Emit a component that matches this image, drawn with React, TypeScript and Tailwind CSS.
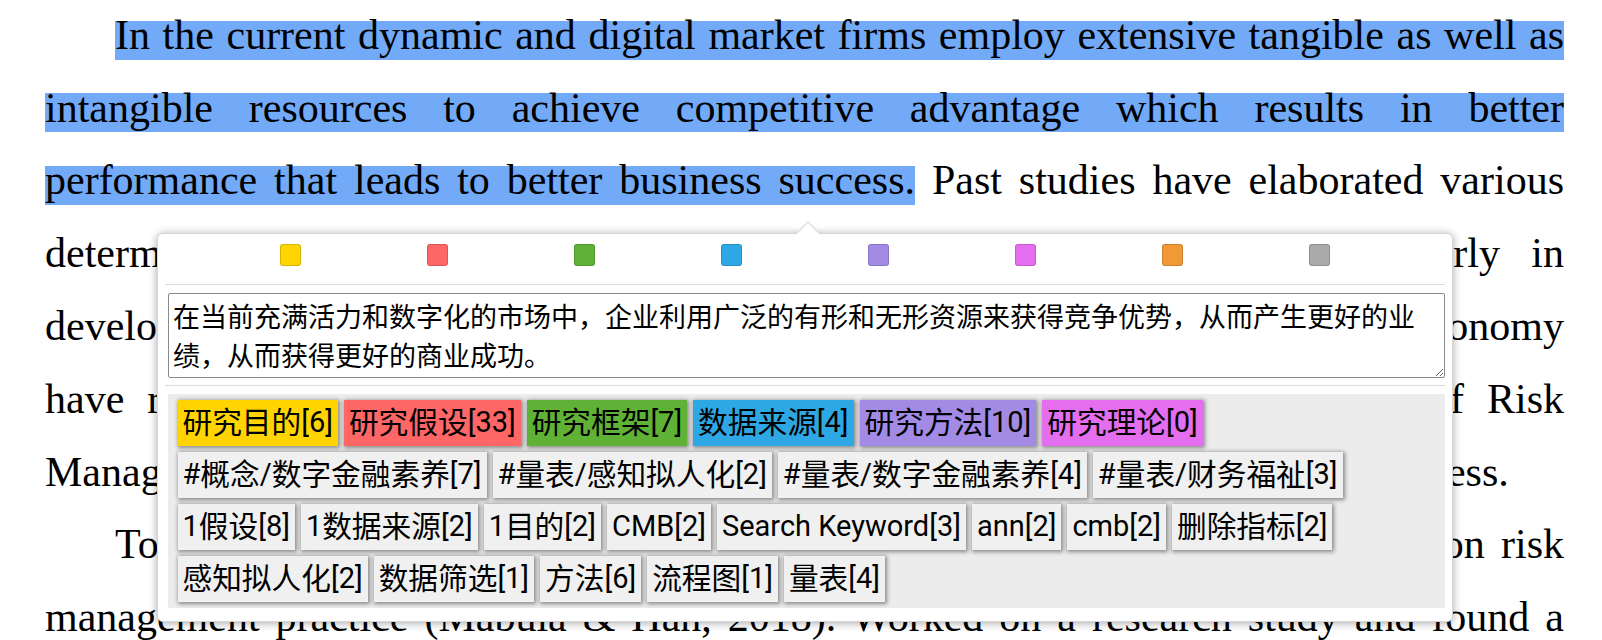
import React from "react";

const HL =
  "bg-[linear-gradient(#72aaf8,#72aaf8)] bg-no-repeat bg-[length:100%_39px] bg-[position:0_10.7px] py-[2px]";

function Line({ children, indent, last }: { children: React.ReactNode; indent?: boolean; last?: boolean }) {
  return (
    <div
      className={
        (indent ? "pl-[70px] " : "") +
        (last ? "text-left " : "text-justify [text-align-last:justify] ")
      }
    >
      {children}
    </div>
  );
}

const swatches = ["#ffd400", "#ff6666", "#5fb236", "#2ea8e5", "#a28ae5", "#e56eee", "#f19837", "#aaaaaa"];

const colored: [string, string][] = [
  ["研究目的[6]", "bg-[#ffd400]"],
  ["研究假设[33]", "bg-[#ff6666]"],
  ["研究框架[7]", "bg-[#5fb236]"],
  ["数据来源[4]", "bg-[#2ea8e5]"],
  ["研究方法[10]", "bg-[#a28ae5]"],
  ["研究理论[0]", "bg-[#e56eee]"],
];

const rows: string[][] = [
  ["#概念/数字金融素养[7]", "#量表/感知拟人化[2]", "#量表/数字金融素养[4]", "#量表/财务福祉[3]"],
  ["1假设[8]", "1数据来源[2]", "1目的[2]", "CMB[2]", "Search Keyword[3]", "ann[2]", "cmb[2]", "删除指标[2]"],
  ["感知拟人化[2]", "数据筛选[1]", "方法[6]", "流程图[1]", "量表[4]"],
];

function TagText({ text }: { text: string }) {
  const parts = text.split(/([\u4e00-\u9fff]+)/).filter((p) => p.length > 0);
  return (
    <>
      {parts.map((p, i) =>
        /[\u4e00-\u9fff]/.test(p) ? (
          <span key={i} className="text-[29.7px]">
            {p}
          </span>
        ) : (
          <span key={i}>{p}</span>
        )
      )}
    </>
  );
}

function Tag({ text, bg }: { text: string; bg: string }) {
  return (
    <div
      className={
        "h-[46px] px-[5px] flex items-center whitespace-nowrap text-[29px] text-black shadow-[1px_1px_4px_1px_rgba(0,0,0,0.42)] " +
        bg
      }
    >
      <TagText text={text} />
    </div>
  );
}

export default function App() {
  return (
    <div className="relative w-[1602px] h-[640px] overflow-hidden bg-white">
      <div className="pl-[45px] pr-[38px] -mt-[1.2px] font-['Liberation_Serif',serif] text-[42px] leading-[72.8px] text-black">
        <Line indent>
          <span className={HL}>
            In the current dynamic and digital market firms employ extensive tangible as well as
          </span>
        </Line>
        <Line>
          <span className={HL}>
            intangible resources to achieve competitive advantage which results in better
          </span>
        </Line>
        <Line>
          <span className={HL}>performance that leads to better business success.</span> Past studies have
          elaborated various
        </Line>
        <Line>
          determinants of business success and the performance of firms, particularly in
        </Line>
        <Line>
          developing countries. Studies conducted in the context of the digital economy
        </Line>
        <Line>
          have recognized the significant importance of the effective implementation of Risk
        </Line>
        <Line last>
          Management practices as a key determinant of the small and medium business success.
        </Line>
        <Line indent>
          To achieve business success, firms are required to place a strong emphasis on risk
        </Line>
        <Line>
          management practice (Mabula &amp; Han, 2018). Worked on a research study and found a
        </Line>
      </div>

      <div className="absolute left-[157px] top-[233px] w-[1296px] bg-white rounded-[6px] border border-[#d6d6d6] shadow-[0_1px_8px_rgba(0,0,0,0.35)] font-['Noto_Sans_CJK_SC',sans-serif]">
        <div className="absolute left-[641px] -top-[9px] w-[18px] h-[18px] rotate-45 bg-white border-t border-l border-[#d6d6d6]" />
        <div className="relative flex justify-center pt-[10px] pb-[18px]">
          <div className="grid grid-cols-8 w-[1176px]">
            {swatches.map((c) => (
              <div key={c} className="flex justify-center">
                <div
                  className="w-[21px] h-[22px] rounded-[3px] border border-black/15"
                  style={{ backgroundColor: c }}
                />
              </div>
            ))}
          </div>
        </div>
        <div className="mx-[7px] h-px bg-[#dcdcdc]" />
        <div className="pl-[10px] pr-[7px] pb-[13px]">
          <textarea
            className="mt-[8px] block w-full h-[85px] overflow-hidden border border-[#8a8a8a] rounded-[2px] px-[4px] py-[2px] text-[27px] leading-[39px] text-black font-['Noto_Sans_CJK_SC',sans-serif]"
            defaultValue={
              "在当前充满活力和数字化的市场中，企业利用广泛的有形和无形资源来获得竞争优势，从而产生更好的业\n绩，从而获得更好的商业成功。"
            }
          />
          <div className="mt-[7px] -ml-[3px] h-px bg-[#dcdcdc]" />
          <div className="mt-[8px] bg-[#ececec] pl-[9.5px] py-[6px] flex flex-col gap-[6px] font-['Roboto','Noto_Sans_CJK_SC',sans-serif]">
            <div className="flex gap-[6px]">
              {colored.map(([t, bg]) => (
                <Tag key={t} text={t} bg={bg} />
              ))}
            </div>
            {rows.map((r, i) => (
              <div key={i} className="flex gap-[6px]">
                {r.map((t) => (
                  <Tag key={t} text={t} bg="bg-[#f0f0f0]" />
                ))}
              </div>
            ))}
          </div>
        </div>
      </div>
    </div>
  );
}
